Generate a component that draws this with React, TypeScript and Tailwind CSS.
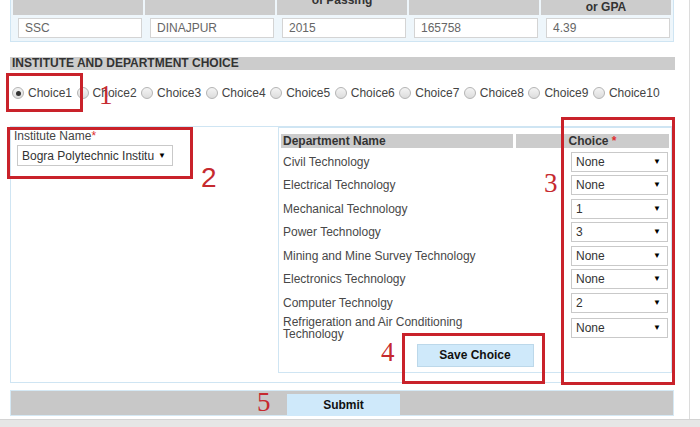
import React from 'react'

const departments: { name: React.ReactNode; value: string; tall?: boolean }[] = [
  { name: 'Civil Technology', value: 'None' },
  { name: 'Electrical Technology', value: 'None' },
  { name: 'Mechanical Technology', value: '1' },
  { name: 'Power Technology', value: '3' },
  { name: 'Mining and Mine Survey Technology', value: 'None' },
  { name: 'Electronics Technology', value: 'None' },
  { name: 'Computer Technolgy', value: '2' },
  { name: <>Refrigeration and Air Conditioning<br />Technology</>, value: 'None', tall: true },
]

const results = ['SSC', 'DINAJPUR', '2015', '165758', '4.39']

const FakeSelect = ({ value, className, textWidth }: { value: string; className: string; textWidth?: string }) => (
  <div className={`flex items-center justify-between bg-white border border-[#c9c9c9] text-[12px] text-[#333] ${className}`}>
    <span className={`pl-[4px] overflow-hidden whitespace-nowrap ${textWidth ?? ''}`}>{value}</span>
    <span className="pr-[6px] pl-[2px] text-[8px] text-black leading-none">▼</span>
  </div>
)

const Radio = ({ checked }: { checked?: boolean }) => (
  <span className="flex items-center justify-center w-[12px] h-[12px] rounded-full border border-[#b4b4b4] bg-gradient-to-b from-[#f4f4f4] to-[#dcdcdc] shrink-0">
    {checked && <span className="w-[5px] h-[5px] rounded-full bg-[#333]" />}
  </span>
)

const App = () => {
  return (
    <div className="w-[700px] h-[427px] overflow-hidden bg-white font-['Liberation_Sans',Arial,sans-serif]">
      <div className="relative w-[690px] h-[419px] border-r border-[#dcdcdc] overflow-hidden">
        {/* previous exam result table, scrolled partly out of view */}
        <div className="ml-[10px] mt-[-30px] w-[664px] bg-[#eef6fb] border border-[#cfe5f3]">
          <div className="grid grid-cols-5 gap-x-[2px] px-[2px] pt-[2px]">
            <div className="h-[42px] bg-[#cccccc] flex items-center justify-center text-center text-[12px] leading-[13px] font-bold text-[#333]">Examination Passed</div>
            <div className="h-[42px] bg-[#cccccc] flex items-center justify-center text-center text-[12px] leading-[13px] font-bold text-[#333]">Board/Institution</div>
            <div className="h-[42px] bg-[#cccccc] flex items-center justify-center text-center text-[12px] leading-[13px] font-bold text-[#333]">Year<br />of Passing</div>
            <div className="h-[42px] bg-[#cccccc] flex items-center justify-center text-center text-[12px] leading-[13px] font-bold text-[#333]">Exam Roll No</div>
            <div className="h-[42px] bg-[#cccccc] flex items-center justify-center text-center text-[12px] leading-[13px] font-bold text-[#333]">Total<br />Marks,<br />or GPA</div>
          </div>
          <div className="grid grid-cols-5 gap-x-[2px] px-[2px] pt-[3px] pb-[3px]">
            {results.map((r) => (
              <div key={r}>
                <div className="ml-[5px] w-[124px] h-[20px] bg-white border border-[#d4d4d4] pl-[6px] text-[12px] leading-[18px] text-[#666]">{r}</div>
              </div>
            ))}
          </div>
        </div>

        {/* section title */}
        <div className="ml-[10px] mt-[15px] w-[665px] h-[13px] bg-[#cccccc] pl-[2px] text-[12px] leading-[13px] font-bold text-[#333]">
          INSTITUTE AND DEPARTMENT CHOICE
        </div>

        {/* choice radios */}
        <div className="mt-[16px] ml-[12px] h-[14px] flex items-center gap-[4.5px] text-[12px] text-[#444]">
          {Array.from({ length: 10 }, (_, i) => (
            <label key={i} className="flex items-center gap-[4px] whitespace-nowrap">
              <Radio checked={i === 0} />
              <span>Choice{i + 1}</span>
            </label>
          ))}
        </div>

        {/* institute + department box */}
        <div className="ml-[10px] mt-[26px] w-[664px] h-[257px] border border-[#cfe5f3] flex">
          <div className="w-[267px] pl-[3px] pt-[3px]">
            <div className="text-[12px] leading-[13px] text-[#444]">
              Institute Name<span className="text-[#e03030]">*</span>
            </div>
            <FakeSelect value="Bogra Polytechnic Institute" textWidth="w-[136px]" className="mt-[2px] ml-[3px] w-[156px] h-[21px] text-[12px]" />
          </div>
          <div className="w-[394px] h-[246px] border border-[#cfe5f3] pt-[6px] px-[2px]">
            <div className="flex h-[14px] text-[12px] leading-[14px] font-bold text-[#333]">
              <div className="w-[232px] bg-[#cccccc] pl-[2px]">Department Name</div>
              <div className="ml-[3px] flex-1 bg-[#cccccc] text-center">
                Choice <span className="text-[#e03030]">*</span>
              </div>
            </div>
            <div className="mt-[2px]">
              {departments.map((d, i) => (
                <div key={i} className={`flex items-center justify-between ${d.tall ? 'h-[26px]' : 'h-[23.5px]'}`}>
                  <div className="pl-[2px] text-[12px] leading-[12px] text-[#484848]">{d.name}</div>
                  <FakeSelect value={d.value} className="w-[97px] h-[20px] mr-[1px]" />
                </div>
              ))}
            </div>
            <div className="mt-[3px] flex justify-center">
              <button type="button" className="w-[117px] h-[23px] bg-[#cfe9fa] border border-[#bcd8ea] text-[12px] font-bold text-[#111]">
                Save Choice
              </button>
            </div>
          </div>
        </div>

        {/* submit bar */}
        <div className="ml-[10px] mt-[7px] w-[664px] h-[26px] bg-[#c8c8c8] border border-[#d5e9f5] py-[1px]">
          <button type="button" className="ml-[276px] w-[113px] h-[22px] bg-[#cfe9fa] text-[12px] font-bold text-[#111]">
            Submit
          </button>
        </div>

        {/* red annotations */}
        <div className="absolute left-[6px] top-[73px] w-[77px] h-[39px] border-[3px] border-[#c9222a]" />
        <div className="absolute left-[99px] top-[80px] text-[27px] leading-[30px] text-[#c62a2f] font-['Liberation_Serif',serif]">1</div>
        <div className="absolute left-[7px] top-[127px] w-[186px] h-[52px] border-[3px] border-[#c9222a]" />
        <div className="absolute left-[201px] top-[162px] text-[28px] leading-[32px] text-[#c62a2f]">2</div>
        <div className="absolute left-[561px] top-[117px] w-[114px] h-[268px] border-[3px] border-[#c9222a]" />
        <div className="absolute left-[544px] top-[168px] text-[27px] leading-[30px] text-[#c62a2f] font-['Liberation_Serif',serif]">3</div>
        <div className="absolute left-[402px] top-[333px] w-[143px] h-[51px] border-[3px] border-[#c9222a]" />
        <div className="absolute left-[381px] top-[337px] text-[27px] leading-[30px] text-[#c62a2f] font-['Liberation_Serif',serif]">4</div>
        <div className="absolute left-[257px] top-[387px] text-[27px] leading-[30px] text-[#c62a2f] font-['Liberation_Serif',serif]">5</div>
      </div>
      <div className="h-[8px] bg-[#e6e6e6] border-t border-[#d4d4d4]" />
    </div>
  )
}

export default App
